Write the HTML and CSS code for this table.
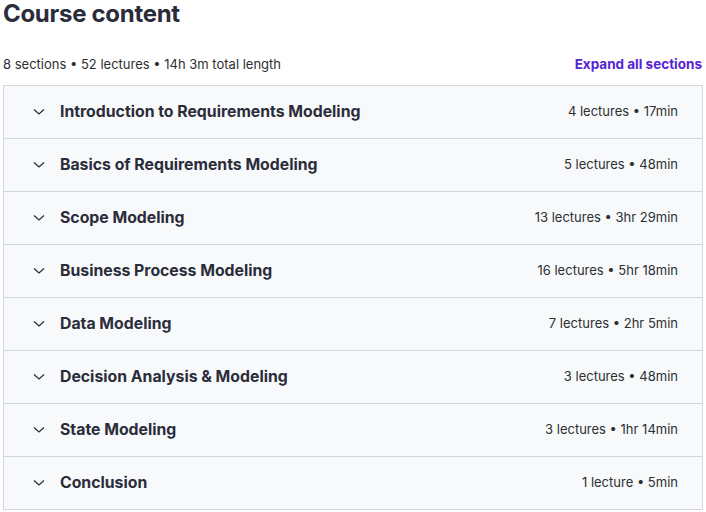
FILE: index.html
```html
<!DOCTYPE html>
<html>
<head>
<meta charset="utf-8">
<link rel="stylesheet" href="styles.css">
</head>
<body>
<div class="page">
  <h2 class="title">Course content</h2>
  <div class="summary">
    <span class="stats">8 sections • 52 lectures • 14h 3m total length</span>
    <button class="expand">Expand all sections</button>
  </div>
  <div class="sections">
    <div class="section"><span class="chev"><svg width="12" height="8" viewBox="0 0 12 8"><path d="M1 1.5 L6 6 L11 1.5" fill="none" stroke="currentColor" stroke-width="1.3"/></svg></span><span class="name">Introduction to Requirements Modeling</span><span class="meta">4 lectures • 17min</span></div>
    <div class="section"><span class="chev"><svg width="12" height="8" viewBox="0 0 12 8"><path d="M1 1.5 L6 6 L11 1.5" fill="none" stroke="currentColor" stroke-width="1.3"/></svg></span><span class="name">Basics of Requirements Modeling</span><span class="meta">5 lectures • 48min</span></div>
    <div class="section"><span class="chev"><svg width="12" height="8" viewBox="0 0 12 8"><path d="M1 1.5 L6 6 L11 1.5" fill="none" stroke="currentColor" stroke-width="1.3"/></svg></span><span class="name">Scope Modeling</span><span class="meta">13 lectures • 3hr 29min</span></div>
    <div class="section"><span class="chev"><svg width="12" height="8" viewBox="0 0 12 8"><path d="M1 1.5 L6 6 L11 1.5" fill="none" stroke="currentColor" stroke-width="1.3"/></svg></span><span class="name">Business Process Modeling</span><span class="meta">16 lectures • 5hr 18min</span></div>
    <div class="section"><span class="chev"><svg width="12" height="8" viewBox="0 0 12 8"><path d="M1 1.5 L6 6 L11 1.5" fill="none" stroke="currentColor" stroke-width="1.3"/></svg></span><span class="name">Data Modeling</span><span class="meta">7 lectures • 2hr 5min</span></div>
    <div class="section"><span class="chev"><svg width="12" height="8" viewBox="0 0 12 8"><path d="M1 1.5 L6 6 L11 1.5" fill="none" stroke="currentColor" stroke-width="1.3"/></svg></span><span class="name">Decision Analysis &amp; Modeling</span><span class="meta">3 lectures • 48min</span></div>
    <div class="section"><span class="chev"><svg width="12" height="8" viewBox="0 0 12 8"><path d="M1 1.5 L6 6 L11 1.5" fill="none" stroke="currentColor" stroke-width="1.3"/></svg></span><span class="name">State Modeling</span><span class="meta">3 lectures • 1hr 14min</span></div>
    <div class="section"><span class="chev"><svg width="12" height="8" viewBox="0 0 12 8"><path d="M1 1.5 L6 6 L11 1.5" fill="none" stroke="currentColor" stroke-width="1.3"/></svg></span><span class="name">Conclusion</span><span class="meta">1 lecture • 5min</span></div>
  </div>
</div>
</body>
</html>
```

FILE: styles.css
```css
* { box-sizing: border-box; }
html, body { margin: 0; padding: 0; background: #ffffff; }
body {
  font-family: "Inter", "Liberation Sans", sans-serif;
  color: #2d2f31;
}
.page {
  width: 706px;
  padding: 0 3px 0 3px;
}
.title {
  margin: 0;
  font-size: 24px;
  line-height: 28px;
  font-weight: 700;
  color: #2b2c3a;
  letter-spacing: -0.3px;
}
.summary {
  display: flex;
  justify-content: space-between;
  align-items: center;
  margin-top: 26px;
  height: 20px;
  margin-bottom: 11px;
}
.stats {
  font-size: 13px;
  color: #2d2f31;
}
.expand {
  border: 0;
  background: none;
  padding: 0 1px 0 0;
  font-family: inherit;
  font-size: 13.5px;
  font-weight: 700;
  color: #5624d0;
}
.sections {
  border: 1px solid #d1d7dc;
  border-bottom: 0;
}
.section {
  display: flex;
  align-items: center;
  height: 53px;
  background: #f7f9fa;
  border-bottom: 1px solid #d1d7dc;
  padding: 0 24px 0 29px;
}
.chev {
  display: flex;
  width: 12px;
  color: #2d2f31;
  margin-right: 15px;
}
.name {
  flex: 1;
  font-size: 15.8px;
  font-weight: 700;
  color: #2b2c3a;
  padding-bottom: 2px;
}
.meta {
  font-size: 13px;
  color: #2d2f31;
  padding-bottom: 2px;
}
```
